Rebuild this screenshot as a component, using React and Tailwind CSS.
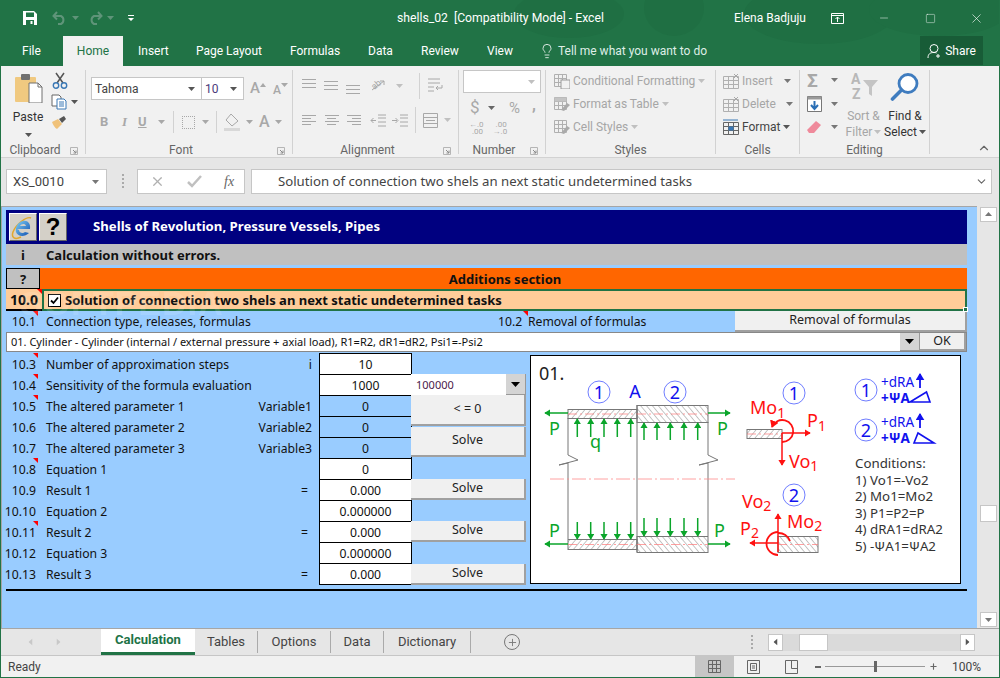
import { ChevronDown, ChevronUp, Lightbulb, Minus, Plus, Square, X } from "lucide-react";

const ui = "font-['Roboto',sans-serif]";
const cell = "font-['Noto_Sans',sans-serif]";

function Caret({ className = "" }) {
  return (
    <svg width="7" height="4" viewBox="0 0 7 4" className={className}>
      <path d="M0 0h7L3.5 4z" fill="currentColor" />
    </svg>
  );
}

function SaveIcon() {
  return (
    <svg width="16" height="16" viewBox="0 0 16 16">
      <path d="M1 1h11l3 3v11H1z" fill="#fff" />
      <rect x="4" y="2.5" width="8" height="4.5" fill="#217346" />
      <rect x="4" y="10" width="8" height="5" fill="#217346" />
      <rect x="8.5" y="11" width="2" height="3" fill="#fff" />
    </svg>
  );
}

function Arrow({ flip }) {
  return (
    <svg width="16" height="14" viewBox="0 0 16 14" className={flip ? "-scale-x-100" : ""}>
      <path d="M5 1 1.5 5 5 8.500M2 5h7a4.500 4.500 0 0 1 0 8H6" fill="none" stroke="#5f9479" strokeWidth="2" />
    </svg>
  );
}

function Lines({ widths, gap = "gap-[2px]", color = "bg-[#a8a8a8]", align = "items-start" }) {
  return (
    <div className={`flex flex-col ${gap} ${align}`}>
      {widths.map((w, i) => (
        <div key={i} className={`h-px ${color}`} style={{ width: w }} />
      ))}
    </div>
  );
}

function RibbonGroup({ label, width, launcher, children }) {
  return (
    <div className="relative h-[84px] mt-[4px] border-r border-[#d2d2d2] shrink-0" style={{ width }}>
      {children}
      <div className={`absolute bottom-[-4px] left-0 right-0 text-center text-[12px] leading-[16px] text-[#666] whitespace-nowrap ${launcher ? "pr-[16px]" : ""}`}>
        {label}
      </div>
      {launcher && (
        <svg width="8" height="8" viewBox="0 0 8 8" className="absolute right-[7px] bottom-[-1px]">
          <path d="M.5.5h7v7h-7z" fill="none" stroke="#b5b5b5" />
          <path d="M3 3l3 3M6 3.500V6H3.500" fill="none" stroke="#8a8a8a" />
        </svg>
      )}
    </div>
  );
}

function ClipboardGroup() {
  return (
    <div className="flex pt-[2px] pl-[11px]">
      <div className="flex flex-col items-center w-[32px]">
        <svg width="30" height="31" viewBox="0 0 30 31">
          <rect x="2" y="5" width="21" height="25" rx="1" fill="#f0c980" />
          <rect x="8" y="2" width="9" height="6" rx="1" fill="#707070" />
          <path d="M16 11h9l4 4v16H16z" fill="#fff" stroke="#707070" />
          <path d="M25 11v4h4" fill="none" stroke="#707070" />
        </svg>
        <div className="text-[12px] leading-[16px] text-[#333] mt-[6px]">Paste</div>
        <Caret className="text-[#555] mt-[8px]" />
      </div>
      <div className="flex flex-col ml-[7px] gap-[5px]">
        <svg width="16" height="17" viewBox="0 0 16 17" className="ml-px">
          <path d="M4 1l7 10M12 1 5 11" fill="none" stroke="#555" strokeWidth="1.500" />
          <circle cx="4" cy="13.500" r="2.700" fill="none" stroke="#3a78b5" strokeWidth="1.400" />
          <circle cx="12" cy="13.500" r="2.700" fill="none" stroke="#3a78b5" strokeWidth="1.400" />
        </svg>
        <div className="flex items-center gap-[4px]">
          <svg width="16" height="16" viewBox="0 0 16 16">
            <path d="M1 1h7l2 2v9H1z" fill="#fff" stroke="#666" />
            <path d="M6 5h7l2 2v8H6z" fill="#fff" stroke="#3a78b5" />
            <path d="M8 8h5M8 10h5M8 12h5" stroke="#3a78b5" />
          </svg>
          <Caret className="text-[#555]" />
        </div>
        <svg width="16" height="15" viewBox="0 0 16 15">
          <path d="M1 7l6-3 4 5-5 5c-2-1-4-4-5-7z" fill="#f0c27a" />
          <path d="M8 4l5-3 2 3-4 4z" fill="#555" />
        </svg>
      </div>
    </div>
  );
}

function FontGroup() {
  return (
    <div className="pl-[5px] pt-[7px]">
      <div className="flex items-center">
        <div className="w-[111px] h-[23px] bg-white border border-[#c6c6c6] flex items-center justify-between pl-[3px] pr-[6px] text-[12px] text-[#444]">
          Tahoma <Caret className="text-[#555]" />
        </div>
        <div className="w-[42px] h-[23px] bg-white border border-[#c6c6c6] border-l-0 flex items-center justify-between pl-[3px] pr-[6px] text-[12px] text-[#4a3a7a]">
          10 <Caret className="text-[#555]" />
        </div>
        <div className="ml-[6px] text-[15px] text-[#a8a8a8] font-medium">A</div>
        <svg width="6" height="4" viewBox="0 0 6 4" className="mb-[8px]"><path d="M0 4h6L3 0z" fill="#a8a8a8" /></svg>
        <div className="ml-[7px] text-[12px] text-[#a8a8a8] font-medium mt-[2px]">A</div>
        <Caret className="text-[#a8a8a8] mb-[8px]" />
      </div>
      <div className="flex items-center mt-[10px] text-[#a8a8a8] text-[13px] h-[24px]">
        <span className="ml-[9px] font-bold w-[16px]">B</span>
        <span className="ml-[6px] italic w-[16px] font-['Liberation_Serif',serif] font-bold">I</span>
        <span className="underline font-bold w-[13px]">U</span>
        <Caret className="ml-[7px]" />
        <div className="ml-[8px] w-px h-[22px] bg-[#d2d2d2]" />
        <div className="ml-[8px] w-[13px] h-[13px] border border-dotted border-[#a8a8a8]" />
        <Caret className="ml-[7px]" />
        <div className="ml-[7px] w-px h-[22px] bg-[#d2d2d2]" />
        <svg width="16" height="18" viewBox="0 0 16 18" className="ml-[7px]">
          <path d="M7 1l7 7-6 5-6-6z" fill="none" stroke="#a8a8a8" />
          <rect y="15" width="16" height="3" fill="#d8d8d8" />
        </svg>
        <Caret className="ml-[6px]" />
        <span className="ml-[6px] text-[16px] font-medium">A</span>
        <Caret className="ml-[5px]" />
      </div>
    </div>
  );
}

function AlignRow({ top }) {
  return (
    <div className="flex items-center h-[24px] pl-[9px]">
      {top ? (
        <>
          <div className="w-[15px] h-[14px]"><Lines widths={[14, 14, 14]} gap="gap-[3px]" /></div>
          <div className="w-[15px] h-[10px] ml-[7px]"><Lines widths={[14, 14, 14]} gap="gap-[3px]" /></div>
          <div className="w-[15px] ml-[7px] mt-[6px]"><Lines widths={[14, 14, 14]} gap="gap-[3px]" /></div>
          <svg width="24" height="16" viewBox="0 0 24 16" className="ml-[9px] text-[#a8a8a8]">
            <path d="M2 12 14 3M14 3h-4M14 3v4" fill="none" stroke="currentColor" />
            <text x="2" y="10" fontSize="9" fill="currentColor" transform="rotate(-40 6 8)">ab</text>
          </svg>
          <Caret className="text-[#c0c0c0] ml-[2px]" />
          <div className="w-px h-[26px] bg-[#d2d2d2] ml-[16px]" />
          <svg width="18" height="16" viewBox="0 0 18 16" className="ml-[7px]">
            <path d="M1 1h12M1 5h12M1 9h6M1 13h6M15 7v3h-6M11 8 9 10l2 2" fill="none" stroke="#a8a8a8" />
          </svg>
        </>
      ) : (
        <>
          <div className="w-[15px]"><Lines widths={[14, 9, 14, 9]} /></div>
          <div className="w-[15px] ml-[7px]"><Lines widths={[14, 9, 14, 9]} align="items-center" /></div>
          <div className="w-[15px] ml-[7px]"><Lines widths={[14, 9, 14, 9]} align="items-end" /></div>
          <svg width="16" height="13" viewBox="0 0 16 13" className="ml-[9px]">
            <path d="M8 1h8M8 4h8M8 8h8M8 12h8M1 6.500h5M3.500 4 1 6.500 3.500 9" fill="none" stroke="#a8a8a8" />
          </svg>
          <svg width="16" height="13" viewBox="0 0 16 13" className="ml-[6px]">
            <path d="M8 1h8M8 4h8M8 8h8M8 12h8M0 6.500h5M3.500 4 6 6.500 3.500 9" fill="none" stroke="#a8a8a8" />
          </svg>
          <div className="w-px h-[26px] bg-[#d2d2d2] ml-[7px]" />
          <svg width="15" height="15" viewBox="0 0 15 15" className="ml-[7px]">
            <path d="M.5.500h14v14H.5zM.5 4.500h14M.5 10.500h14M3 7.500h9" fill="none" stroke="#a8a8a8" />
          </svg>
          <Caret className="text-[#c0c0c0] ml-[6px]" />
        </>
      )}
    </div>
  );
}

function NumberGroup() {
  return (
    <div className="pl-[4px]">
      <div className="w-[78px] h-[23px] bg-white border border-[#c6c6c6] flex items-center justify-end pr-[5px]">
        <Caret className="text-[#c0c0c0]" />
      </div>
      <div className="flex items-center mt-[4px] text-[#a8a8a8] pl-[7px] h-[22px]">
        <span className="text-[17px] w-[15px]">$</span>
        <Caret className="text-[#666] ml-[3px]" />
        <span className="text-[15px] ml-[14px]">%</span>
        <span className="text-[16px] font-bold ml-[12px] -mt-[6px]">,</span>
      </div>
      <div className="flex pl-[6px] mt-[2px] gap-[9px] text-[#a8a8a8] text-[8px] leading-[7px]">
        <div><div>←.0</div><div className="pl-[3px]">.00</div></div>
        <div><div className="pl-[3px]">.00</div><div>→.0</div></div>
      </div>
    </div>
  );
}

function StyleRow({ icon, label }) {
  return (
    <div className="flex items-center h-[23px] text-[#a6a6a6] text-[12px] whitespace-nowrap">
      <svg width="16" height="16" viewBox="0 0 16 16" className="mr-[3px] shrink-0">
        <path d="M.5 1.500h12v12H.5zM.5 5.500h12M.5 9.500h12M4.500 1.500v12M8.500 1.500v12" fill="none" stroke="#b0b0b0" />
        {icon === "a" && <rect x="7" y="7" width="9" height="9" fill="#f1f1f1" stroke="#999" />}
        {icon === "b" && <rect x=".5" y="1.500" width="12" height="4" fill="#c4c4c4" />}
        {icon === "b" && <path d="M7 14l6-7 3 2-6 6z" fill="#aaa" />}
        {icon === "c" && <path d="M7 14l6-7 3 2-6 6z" fill="#aaa" />}
      </svg>
      <span>{label}</span>
      <Caret className="ml-[3px] text-[#c0c0c0]" />
    </div>
  );
}

function CellRow({ label, mark, caretGap, dark }) {
  return (
    <div className={`flex items-center h-[23px] text-[12px] whitespace-nowrap ${dark ? "text-[#444]" : "text-[#a6a6a6]"}`}>
      <svg width="16" height="16" viewBox="0 0 16 16" className="mr-[3px] shrink-0">
        <path d="M.5 3.500h15v12H.5zM.5 7.500h15M.5 11.500h15M5.500 3.500v12M10.500 3.500v12" fill="none" stroke={dark ? "#666" : "#b0b0b0"} />
        {mark === "x" && <path d="M11 1l4 4M15 1l-4 4" stroke="#a8a8a8" />}
        {mark === "fmt" && <rect x="5.500" y="7.500" width="5" height="4" fill="#3a78b5" />}
        {mark === "fmt" && <path d="M0 1h15" stroke="#3a78b5" />}
      </svg>
      <span>{label}</span>
      <Caret className={`${caretGap} ${dark ? "text-[#555]" : "text-[#777]"}`} />
    </div>
  );
}

function EditingGroup() {
  return (
    <div className="flex pt-[2px] pl-[7px]">
      <div className="flex flex-col w-[36px] gap-[8px]">
        <div className="flex items-center h-[16px]">
          <span className="text-[#a8a8a8] text-[19px] leading-none font-bold w-[19px]">Σ</span>
          <Caret className="text-[#777] ml-[5px]" />
        </div>
        <div className="flex items-center h-[16px]">
          <svg width="15" height="16" viewBox="0 0 15 16"><path d="M.5.500h14v15H.5z" fill="#fff" stroke="#777" /><path d="M.5.500h14v3H.5z" fill="#999" /><path d="M7.500 5v8M4 9l3.500 4L11 9" fill="none" stroke="#2a6fb5" strokeWidth="2" /></svg>
          <Caret className="text-[#777] ml-[9px]" />
        </div>
        <div className="flex items-center h-[14px]">
          <svg width="14" height="13" viewBox="0 0 14 13"><path d="M9 0l5 4-7 8-5 0-2-3z" fill="#ef8a9b" /></svg>
          <Caret className="text-[#777] ml-[10px]" />
        </div>
      </div>
      <div className="flex flex-col items-center w-[41px] text-[#a6a6a6] text-[12px] leading-[16px]">
        <svg width="30" height="28" viewBox="0 0 30 28">
          <text x="2" y="12" fontSize="14" fontWeight="700" fill="#b8b8b8">A</text>
          <text x="3" y="27" fontSize="14" fontWeight="700" fill="#b8b8b8">Z</text>
          <path d="M14 8h15l-6 7v9l-3-2v-7z" fill="#c4c4c4" />
        </svg>
        <div className="mt-[8px] whitespace-nowrap">Sort &amp;</div>
        <div className="flex items-center whitespace-nowrap">Filter<Caret className="ml-[2px] text-[#c0c0c0]" /></div>
      </div>
      <div className="flex flex-col items-center w-[42px] text-[#333] text-[12px] leading-[16px]">
        <svg width="30" height="30" viewBox="0 0 30 30">
          <circle cx="18" cy="11.500" r="9" fill="#fff" stroke="#3f7cbf" strokeWidth="2.800" />
          <path d="M11.500 18 2.500 27" stroke="#3f7cbf" strokeWidth="3.600" strokeLinecap="round" />
        </svg>
        <div className="mt-[6px] whitespace-nowrap">Find &amp;</div>
        <div className="flex items-center whitespace-nowrap">Select<Caret className="ml-[2px] text-[#555]" /></div>
      </div>
    </div>
  );
}

function RedMark() {
  return <div className="absolute right-0 top-0 w-[5px] h-[5px] bg-[#ff0000] [clip-path:polygon(0_0,100%_0,100%_100%)]" />;
}

function ExcelButton({ label, className = "" }) {
  return (
    <div className={`bg-[#f0f0f0] border-r-2 border-b-2 border-[#a0a0a0] flex items-center justify-center text-[12.500px] text-[#222] ${cell} ${className}`}>
      {label}
    </div>
  );
}

function DropButton({ className = "" }) {
  return (
    <div className={`bg-[#d4d4d4] border-r border-b border-[#999] flex items-center justify-center ${className}`}>
      <svg width="9" height="5" viewBox="0 0 9 5"><path d="M0 0h9L4.500 5z" fill="#000" /></svg>
    </div>
  );
}

const rows = [
  { n: "10.3", label: "Number of approximation steps", extra: "i", value: "10", white: true, mark: true },
  { n: "10.4", label: "Sensitivity of the formula evaluation", value: "1000", white: true, mark: true },
  { n: "10.5", label: "The altered parameter 1", extra: "Variable1", value: "0", mark: true },
  { n: "10.6", label: "The altered parameter 2", extra: "Variable2", value: "0" },
  { n: "10.7", label: "The altered parameter 3", extra: "Variable3", value: "0" },
  { n: "10.8", label: "Equation 1", value: "0", white: true, mark: true },
  { n: "10.9", label: "Result 1", extra: "=", value: "0.000", white: true },
  { n: "10.10", label: "Equation 2", value: "0.000000", white: true },
  { n: "10.11", label: "Result 2", extra: "=", value: "0.000", white: true, mark: true },
  { n: "10.12", label: "Equation 3", value: "0.000000", white: true },
  { n: "10.13", label: "Result 3", extra: "=", value: "0.000", white: true },
];

function DataRow({ row }) {
  return (
    <div className="flex h-[21px] items-center text-[12.200px] text-[#111]">
      <div className="relative w-[32px] h-full flex items-center justify-end shrink-0 pt-[3px]">
        <span className="pr-[2px]">{row.n}</span>
        {row.mark && <RedMark />}
      </div>
      <div className="w-[255px] pl-[8px] shrink-0 whitespace-nowrap pt-[3px]">{row.label}</div>
      <div className={`w-[19px] shrink-0 flex justify-end whitespace-nowrap pt-[3px] ${row.extra === "=" ? "pr-[4px]" : ""}`}>{row.extra}</div>
      <div className={`w-[93px] h-[22px] -mb-px border border-black text-center shrink-0 ml-[7px] leading-[21px] ${row.white ? "bg-white" : ""}`}>
        {row.value}
      </div>
    </div>
  );
}

function Arrowhead({ id, color }) {
  return (
    <marker id={id} markerWidth="4" markerHeight="5" refX="3.500" refY="2.500" orient="auto">
      <path d="M0 0 4 2.500 0 5z" fill={color} />
    </marker>
  );
}

function Hatched({ x, y, w, h, fill }) {
  return (
    <>
      <rect x={x} y={y} width={w} height={h} fill={fill} stroke="#777" strokeWidth="1" />
      <path d={`M${x} ${y + h / 2}H${x + w}`} stroke="#ff7777" strokeWidth="0.700" strokeDasharray="9 3 2 3" />
    </>
  );
}

function Circled({ x, y, n }) {
  return (
    <>
      <circle cx={x} cy={y} r="11" fill="none" stroke="#4a5cff" strokeWidth="0.800" />
      <text x={x} y={y + 6.500} textAnchor="middle" fontSize="18" fill="#1111ee">{n}</text>
    </>
  );
}

function GreenArrow({ d }) {
  return <path d={d} stroke="#0aa52a" strokeWidth="1.500" fill="none" markerEnd="url(#g)" />;
}

function Diagram() {
  const xs1 = [577.3, 590.7, 604, 617.3, 630.7];
  const xs2 = [644, 657, 670.3, 684, 697.7];
  return (
    <svg viewBox="530 355 431 229" className="w-[431px] h-[229px] font-['Noto_Sans',sans-serif]">
      <defs>
        <Arrowhead id="g" color="#0aa52a" />
        <Arrowhead id="r" color="#ff1111" />
        <Arrowhead id="b" color="#1111ee" />
        <pattern id="h1" width="4.500" height="5" patternUnits="userSpaceOnUse" patternTransform="rotate(40)">
          <path d="M0 0V5" stroke="#8a8a8a" strokeWidth="1" />
        </pattern>
        <pattern id="h2" width="4.500" height="5" patternUnits="userSpaceOnUse" patternTransform="rotate(-40)">
          <path d="M0 0V5" stroke="#8a8a8a" strokeWidth="1" />
        </pattern>
      </defs>
      <rect x="530" y="355" width="431" height="229" fill="#fff" stroke="#000" strokeWidth="2" />
      <text x="539" y="380" fontSize="18" fill="#222">01.</text>

      <Circled x={599} y={392} n="1" />
      <text x="635" y="398" textAnchor="middle" fontSize="18" fill="#1111ee">A</text>
      <Circled x={675} y={392} n="2" />

      <path d="M568 418V455L578 460 559 465 568 463V539" fill="none" stroke="#777" />
      <path d="M637 405V552" fill="none" stroke="#777" />
      <path d="M708 422V455L718 460 699 465 708 463V536" fill="none" stroke="#777" />
      <path d="M550 479H735" stroke="#ff8a8a" strokeWidth="0.800" strokeDasharray="14 3 2 3" />

      <Hatched x={568} y={409.500} w={69} h={9} fill="url(#h1)" />
      <Hatched x={637} y={405.500} w={71} h={17} fill="url(#h2)" />
      <Hatched x={568} y={539.500} w={69} h={10} fill="url(#h1)" />
      <Hatched x={637} y={536.500} w={71} h={16} fill="url(#h2)" />

      <GreenArrow d="M568 413H545" />
      <GreenArrow d="M708 413H730" />
      <GreenArrow d="M568 544H545" />
      <GreenArrow d="M708 544H730" />
      {xs1.map((x) => <GreenArrow key={x} d={`M${x} 437V419`} />)}
      {xs2.map((x) => <GreenArrow key={x} d={`M${x} 440V423`} />)}
      {xs1.map((x) => <GreenArrow key={x + 1000} d={`M${x} 522V539`} />)}
      {xs2.map((x) => <GreenArrow key={x + 1000} d={`M${x} 518V536`} />)}
      <g fontSize="18" fill="#0aa52a">
        <text x="549" y="435">P</text>
        <text x="717" y="435">P</text>
        <text x="549" y="537">P</text>
        <text x="714" y="537">P</text>
        <text x="590" y="448">q</text>
      </g>

      <Circled x={794} y={393} n="1" />
      <Hatched x={747} y={429.500} w={35} h={9} fill="url(#h1)" />
      <path d="M782 442A11 11 0 1 0 772 427" fill="none" stroke="#ff1111" strokeWidth="1.800" markerEnd="url(#r)" />
      <path d="M782 433H810" stroke="#ff1111" strokeWidth="1.500" markerEnd="url(#r)" />
      <path d="M782 433V465" stroke="#ff1111" strokeWidth="1.500" markerEnd="url(#r)" />
      <g fill="#ff1111">
        <text x="750" y="414" fontSize="18">Mo<tspan fontSize="14" dy="4">1</tspan></text>
        <text x="807" y="427" fontSize="18">P<tspan fontSize="14" dy="4">1</tspan></text>
        <text x="789" y="468" fontSize="18">Vo<tspan fontSize="14" dy="3">1</tspan></text>
        <text x="742" y="508" fontSize="18">Vo<tspan fontSize="14" dy="3">2</tspan></text>
        <text x="740" y="535" fontSize="18">P<tspan fontSize="14" dy="3">2</tspan></text>
        <text x="787" y="528" fontSize="18">Mo<tspan fontSize="14" dy="3">2</tspan></text>
      </g>
      <Circled x={794} y={495} n="2" />
      <Hatched x={778} y={536.500} w={40} h={16} fill="url(#h2)" />
      <path d="M778 532A11 11 0 1 0 778 555" fill="none" stroke="#ff1111" strokeWidth="1.800" />
      <path d="M778 533A12 12 0 0 1 790 541" fill="none" stroke="#ff1111" strokeWidth="1.800" />
      <path d="M778 552V514" stroke="#ff1111" strokeWidth="1.500" markerEnd="url(#r)" />
      <path d="M778 543H750" stroke="#ff1111" strokeWidth="1.500" markerEnd="url(#r)" />

      <Circled x={866} y={390} n="1" />
      <Circled x={866} y={430} n="2" />
      <g fill="#1111ee" fontSize="13.500">
        <text x="881" y="387">+dRA</text>
        <text x="881" y="403" fontWeight="700">+ΨA</text>
        <text x="881" y="427">+dRA</text>
        <text x="881" y="443" fontWeight="700">+ΨA</text>
      </g>
      <path d="M920 388V374" stroke="#1111ee" strokeWidth="1.800" markerEnd="url(#b)" />
      <path d="M920 428V414" stroke="#1111ee" strokeWidth="1.800" markerEnd="url(#b)" />
      <path d="M910 402H930L926.500 392z" fill="none" stroke="#1111ee" strokeWidth="1.600" />
      <path d="M914 443H934L918 433z" fill="none" stroke="#1111ee" strokeWidth="1.600" />

      <g fontSize="13.300" fill="#333">
        <text x="855" y="468">Conditions:</text>
        <text x="855" y="485">1) Vo1=-Vo2</text>
        <text x="855" y="501">2) Mo1=Mo2</text>
        <text x="855" y="518">3) P1=P2=P</text>
        <text x="855" y="534">4) dRA1=dRA2</text>
        <text x="855" y="551">5) -ΨA1=ΨA2</text>
      </g>
    </svg>
  );
}

function IeIcon() {
  return (
    <svg width="25" height="25" viewBox="0 0 25 25">
      <defs>
        <linearGradient id="ie" x1="0" y1="0" x2="1" y2="1">
          <stop offset="0" stopColor="#7fd0f5" />
          <stop offset="1" stopColor="#0f4fb0" />
        </linearGradient>
      </defs>
      <path d="M20 3C16 1 5 9 2 17c-2 6 2 8 8 5" fill="none" stroke="#e0a82e" strokeWidth="1.500" />
      <path d="M6 14h13c1-6-3-9-7-8-5 1-8 6-7 11 1 4 8 6 13 1l-4-1c-2 2-6 1-6-2z M9 11c1-2 5-3 6 0z" fill="url(#ie)" fillRule="evenodd" />
    </svg>
  );
}

function Sheet() {
  return (
    <div className={`relative w-[976px] shrink-0 bg-[#99ccff] border-l border-t border-[#a6a6a6] pl-[4px] pt-[3px] ${cell} text-[#111]`}>
      <div className="w-[961px] h-[34px] bg-[#000080] flex items-center pl-[3px]">
        <div className="w-[28px] h-[28px] bg-[#d4d0c8] border border-white border-r-[#666] border-b-[#666] flex items-center justify-center">
          <IeIcon />
        </div>
        <div className="w-[28px] h-[28px] ml-[2px] bg-[#d4d0c8] border border-white border-r-[#666] border-b-[#666] flex items-center justify-center text-[24px] font-bold text-black font-['Liberation_Sans',sans-serif]">?</div>
        <div className="ml-[26px] text-white font-bold text-[13.200px]">Shells of Revolution, Pressure Vessels, Pipes</div>
      </div>
      <div className="w-[961px] h-[21px] bg-[#c0c0c0] flex items-center font-bold text-[13px] pt-[3px]">
        <div className="w-[34px] text-center">i</div>
        <div className="pl-[6px]">Calculation without errors.</div>
      </div>
      <div className="w-[961px] h-[21px] mt-[3px] bg-[#ff6600] flex items-center font-bold text-[13px]">
        <div className="w-[34px] h-[21px] bg-[#c0c0c0] border border-black text-center leading-[20px] shrink-0">?</div>
        <div className="flex-1 text-center pt-[3px] pl-[3px]">Additions section</div>
      </div>
      <div className="w-[961px] h-[22px] flex font-bold text-[13px]">
        <div className="relative w-[36px] h-[22px] bg-[#ffcc99] border-b-2 border-black text-center leading-[21px] shrink-0 text-[14px]">
          10.0
          <RedMark />
        </div>
        <div className="relative flex-1 h-[22px] bg-[#ffcc99] border-2 border-[#217346] flex items-center pl-[4px]">
          <div className="w-[13px] h-[13px] bg-white border border-black flex items-center justify-center mr-[4px] shrink-0">
            <svg width="9" height="9" viewBox="0 0 9 9"><path d="M1 4.500 3.500 7 8 1.500" fill="none" stroke="#000" strokeWidth="1.800" /></svg>
          </div>
          <span className="text-[13px] pt-[1px]">Solution of connection two shels an next static undetermined tasks</span>
          <div className="absolute right-[-3px] bottom-[-3px] w-[5px] h-[5px] bg-[#217346] border border-white" />
        </div>
      </div>
      <div className="w-[961px] h-[21px] flex items-center text-[12.200px]">
        <div className="relative w-[32px] h-full flex items-center justify-end shrink-0 pt-[2px]">
          <span className="pr-[2px]">10.1</span>
          <RedMark />
        </div>
        <div className="w-[460px] pl-[8px] shrink-0 pt-[2px]">Connection type, releases, formulas</div>
        <div className="relative w-[30px] h-full flex items-center shrink-0 pt-[2px]">
          10.2
          <RedMark />
        </div>
        <div className="w-[207px] shrink-0 pt-[2px]">Removal of formulas</div>
        <ExcelButton label="Removal of formulas" className="w-[232px] h-[22px] -mt-[2px] pt-[1px]" />
      </div>
      <div className="w-[961px] h-[20px] flex bg-white border border-[#888] text-[11px]">
        <div className="flex-1 pl-[4px] leading-[18px] whitespace-nowrap">
          01. Cylinder - Cylinder (internal / external pressure + axial load), R1=R2, dR1=dR2, Psi1=-Psi2
        </div>
        <DropButton className="w-[20px]" />
        <ExcelButton label="OK" className="w-[46px]" />
      </div>
      <div className="flex mt-[1px]">
        <div className="w-[405px] shrink-0">
          {rows.map((row) => <DataRow key={row.n} row={row} />)}
        </div>
        <div className="w-[115px] shrink-0 pt-[21px] flex flex-col">
          <div className="h-[21px] bg-white flex text-[#4a1a4a] text-[11px] leading-[21px] pl-[5px] justify-between">
            100000
            <DropButton className="w-[20px] h-[21px]" />
          </div>
          <ExcelButton label="< = 0" className="h-[31px]" />
          <ExcelButton label="Solve" className="h-[30px] mt-[1px] pb-[1px]" />
          <ExcelButton label="Solve" className="h-[21px] mt-[22px] pb-[1px]" />
          <ExcelButton label="Solve" className="h-[21px] mt-[21px] pb-[1px]" />
          <ExcelButton label="Solve" className="h-[21px] mt-[22px] pb-[1px]" />
        </div>
        <div className="ml-[4px] mt-[2px]">
          <Diagram />
        </div>
      </div>
      <div className="w-[961px] h-[2px] bg-black mt-[4px]" />
      <div className="absolute left-[18px] top-[80px] text-[34px] leading-[32px] font-bold tracking-[1px] text-white/15 font-['Liberation_Sans',sans-serif] pointer-events-none">SOFTPEDIA</div>
    </div>
  );
}

export default function App() {
  return (
    <div className={`relative w-[1000px] h-[678px] overflow-hidden flex flex-col bg-[#f1f1f1] border-x border-b border-[#217346] ${ui}`}>
      <svg width="500" height="66" viewBox="0 0 500 66" className="absolute right-0 top-0">
        <rect width="500" height="66" fill="#217346" />
        <g fill="#1f6f43">
          <ellipse cx="70" cy="14" rx="55" ry="24" />
          <ellipse cx="175" cy="8" rx="30" ry="28" />
          <ellipse cx="320" cy="14" rx="75" ry="30" />
          <ellipse cx="440" cy="10" rx="70" ry="26" />
        </g>
      </svg>
      <div className="relative h-[36px] flex items-center text-white text-[12px] shrink-0 whitespace-nowrap bg-[#217346] w-[500px] overflow-visible">
        <div className="flex items-center pl-[21px] w-[396px] shrink-0">
          <SaveIcon />
          <div className="ml-[14px]"><Arrow /></div>
          <Caret className="ml-[4px] text-[#5f9479]" />
          <div className="ml-[8px]"><Arrow flip /></div>
          <Caret className="ml-[4px] text-[#5f9479]" />
          <svg width="7" height="6" viewBox="0 0 7 6" className="ml-[14px]"><path d="M0 0h6v1H0zM0 3h6L3 6z" fill="#fff" /></svg>
        </div>
        <div className="w-[337px] shrink-0 whitespace-pre text-[12.200px]">shells_02  [Compatibility Mode] - Excel</div>
        <div className="w-[97px] shrink-0">Elena Badjuju</div>
        <svg width="13" height="11" viewBox="0 0 13 11" className="shrink-0">
          <path d="M.5.500h12v10H.5zM.5 2.500h12M6.500 9V4M4.500 6l2-2 2 2" fill="none" stroke="#fff" />
        </svg>
        <Minus size={12} strokeWidth={1} className="ml-[34px] shrink-0" />
        <Square size={11} strokeWidth={1} className="ml-[35px] shrink-0" />
        <X size={15} strokeWidth={1} className="ml-[33px] shrink-0" />
      </div>
      <div className="relative h-[30px] flex items-center text-white text-[12px] shrink-0 whitespace-nowrap bg-[#217346] w-[500px] overflow-visible">
        <div className="ml-[21px] w-[41px] shrink-0">File</div>
        <div className="w-[60px] h-[30px] bg-[#f1f1f1] text-[#217346] flex items-center justify-center shrink-0">Home</div>
        <div className="ml-[15px] w-[58px] shrink-0">Insert</div>
        <div className="w-[94px] shrink-0">Page Layout</div>
        <div className="w-[78px] shrink-0">Formulas</div>
        <div className="w-[53px] shrink-0">Data</div>
        <div className="w-[66px] shrink-0">Review</div>
        <div className="w-[52px] shrink-0">View</div>
        <Lightbulb size={16} strokeWidth={1.200} className="shrink-0" />
        <div className="ml-[3px] w-[362px] shrink-0 text-[#dfeee6]">Tell me what you want to do</div>
        <div className="w-[63px] h-[29px] bg-[#185c37] flex items-center justify-center gap-[3px] -mt-px shrink-0">
          <svg width="15" height="16" viewBox="0 0 15 16"><circle cx="7" cy="5.500" r="4" fill="none" stroke="#fff" /><path d="M1 15c0-4 2-5.500 6-5.500 1 0 2 .2 2.500.5M11 11v4M9 13h4" fill="none" stroke="#fff" /></svg>
          Share
        </div>
      </div>
      <div className="relative h-[92px] border-b border-[#d2d2d2] flex shrink-0 text-[#333] bg-[#f1f1f1]">
        <RibbonGroup label="Clipboard" width={85} launcher><ClipboardGroup /></RibbonGroup>
        <RibbonGroup label="Font" width={207} launcher><FontGroup /></RibbonGroup>
        <RibbonGroup label="Alignment" width={166} launcher>
          <div className="pt-[4px]"><AlignRow top /><div className="h-[10px]" /><AlignRow /></div>
        </RibbonGroup>
        <RibbonGroup label="Number" width={87} launcher><NumberGroup /></RibbonGroup>
        <RibbonGroup label="Styles" width={170}>
          <div className="pl-[8px] -mt-[1px]">
            <StyleRow icon="a" label="Conditional Formatting" />
            <StyleRow icon="b" label="Format as Table" />
            <StyleRow icon="c" label="Cell Styles" />
          </div>
        </RibbonGroup>
        <RibbonGroup label="Cells" width={84}>
          <div className="pl-[7px] -mt-[1px]">
            <CellRow label="Insert" caretGap="ml-[11px]" mark="x" />
            <CellRow label="Delete" caretGap="ml-[10px]" mark="x" />
            <CellRow label="Format" caretGap="ml-[3px]" mark="fmt" dark />
          </div>
        </RibbonGroup>
        <RibbonGroup label="Editing" width={130}><EditingGroup /></RibbonGroup>
        <ChevronUp size={14} strokeWidth={2} className="absolute right-[8px] bottom-[2px] text-[#666]" />
      </div>
      <div className="relative h-[48px] bg-[#e6e6e6] flex items-start pt-[11px] shrink-0 text-[13px]">
        <div className="ml-[5px] w-[101px] h-[25px] bg-white border border-[#c6c6c6] flex items-center justify-between pl-[6px] pr-[7px] text-[#444]">
          XS_0010 <Caret className="text-[#777]" />
        </div>
        <div className="ml-[15px] mt-[5px] w-[2px] h-[14px] border-l-2 border-dotted border-[#aaa]" />
        <div className="ml-[13px] w-[108px] h-[25px] bg-white border border-[#c6c6c6] flex items-center text-[#b0b0b0]">
          <X size={15} className="ml-[12px]" />
          <svg width="15" height="13" viewBox="0 0 15 13" className="ml-[22px]"><path d="M1 7l4 4 9-10" fill="none" stroke="#c0c0c0" strokeWidth="2.500" /></svg>
          <span className="ml-[22px] font-['Liberation_Serif',serif] italic text-[#666] text-[14px]">fx</span>
        </div>
        <div className={`ml-[6px] w-[741px] h-[25px] bg-white border border-[#c6c6c6] flex items-center justify-between pl-[26px] pr-[3px] text-[#444] text-[13.200px] ${cell}`}>
          Solution of connection two shels an next static undetermined tasks
          <ChevronDown size={13} className="text-[#666]" />
        </div>
      </div>
      <div className="relative h-[422px] flex shrink-0">
        <Sheet />
        <div className="flex-1 bg-[#e6e6e6] flex flex-col items-center justify-between pt-[1px] pb-[1px]">
          <div className="w-[17px] h-[15px] bg-white border border-[#c6c6c6] flex items-center justify-center">
            <svg width="7" height="4" viewBox="0 0 7 4"><path d="M0 4h7L3.500 0z" fill="#777" /></svg>
          </div>
          <div className="w-[17px] h-[18px] bg-white border border-[#c6c6c6] mt-[283px]" />
          <div className="w-[17px] h-[15px] bg-white border border-[#c6c6c6] flex items-center justify-center mt-[90px]">
            <Caret className="text-[#777]" />
          </div>
        </div>
      </div>
      <div className="relative h-[27px] bg-[#e6e6e6] border-t border-[#a6a6a6] flex items-center text-[13px] text-[#444] shrink-0">
        <Caret className="rotate-90 ml-[26px] text-[#c8c8c8]" />
        <Caret className="-rotate-90 ml-[21px] text-[#c8c8c8]" />
        <div className="ml-[39px] w-[94px] h-[26px] bg-white border-b-[3px] border-[#217346] text-[#217346] font-bold flex items-center justify-center -mt-px">Calculation</div>
        <div className="w-[63px] text-center border-r border-[#aaa] h-[22px] leading-[22px]">Tables</div>
        <div className="w-[73px] text-center border-r border-[#aaa] h-[22px] leading-[22px]">Options</div>
        <div className="w-[53px] text-center border-r border-[#aaa] h-[22px] leading-[22px]">Data</div>
        <div className="w-[87px] text-center border-r border-[#aaa] h-[22px] leading-[22px]">Dictionary</div>
        <div className="ml-[33px] w-[16px] h-[16px] rounded-full border border-[#777] flex items-center justify-center">
          <Plus size={11} className="text-[#777]" />
        </div>
        <div className="ml-[231px] w-[2px] h-[14px] border-l-2 border-dotted border-[#aaa]" />
        <div className="ml-[15px] w-[207px] h-[17px] bg-[#dadada] flex justify-between relative">
          <div className="w-[15px] h-[17px] bg-white border border-[#c6c6c6] flex items-center justify-center"><Caret className="rotate-90 text-[#555]" /></div>
          <div className="absolute left-[31px] top-0 w-[29px] h-[17px] bg-white border border-[#c6c6c6]" />
          <div className="w-[15px] h-[17px] bg-white border border-[#c6c6c6] flex items-center justify-center"><Caret className="-rotate-90 text-[#555]" /></div>
        </div>
      </div>
      <div className="relative h-[22px] border-t border-[#c6c6c6] flex items-center text-[12px] text-[#444] shrink-0">
        <div className="ml-[7px] flex-1">Ready</div>
        <div className="w-[39px] h-[21px] bg-[#c6c6c6] flex items-center justify-center">
          <svg width="13" height="13" viewBox="0 0 13 13"><path d="M.5.500h12v12H.5zM.5 4.500h12M.5 8.500h12M4.500.5v12M8.500.5v12" fill="none" stroke="#666" /></svg>
        </div>
        <svg width="13" height="14" viewBox="0 0 13 14" className="ml-[13px]"><path d="M.5.500h12v13H.5zM3.500 3.500h6v7h-6zM5 6h3M5 8h3" fill="none" stroke="#666" /></svg>
        <svg width="13" height="14" viewBox="0 0 13 14" className="ml-[25px]"><path d="M.5.500h12v13H.5zM6.500.5v8h6" fill="none" stroke="#666" /></svg>
        <div className="ml-[17px] w-[6px] h-[2px] bg-[#666]" />
        <div className="relative ml-[4px] w-[100px] h-px bg-[#999]">
          <div className="absolute left-[49px] top-[-5px] w-[3px] h-[11px] bg-[#666]" />
        </div>
        <Plus size={9} strokeWidth={3} className="ml-[4px] text-[#666]" />
        <div className="ml-[14px] mr-[19px] w-[28px] text-[12px]">100%</div>
      </div>
    </div>
  );
}
